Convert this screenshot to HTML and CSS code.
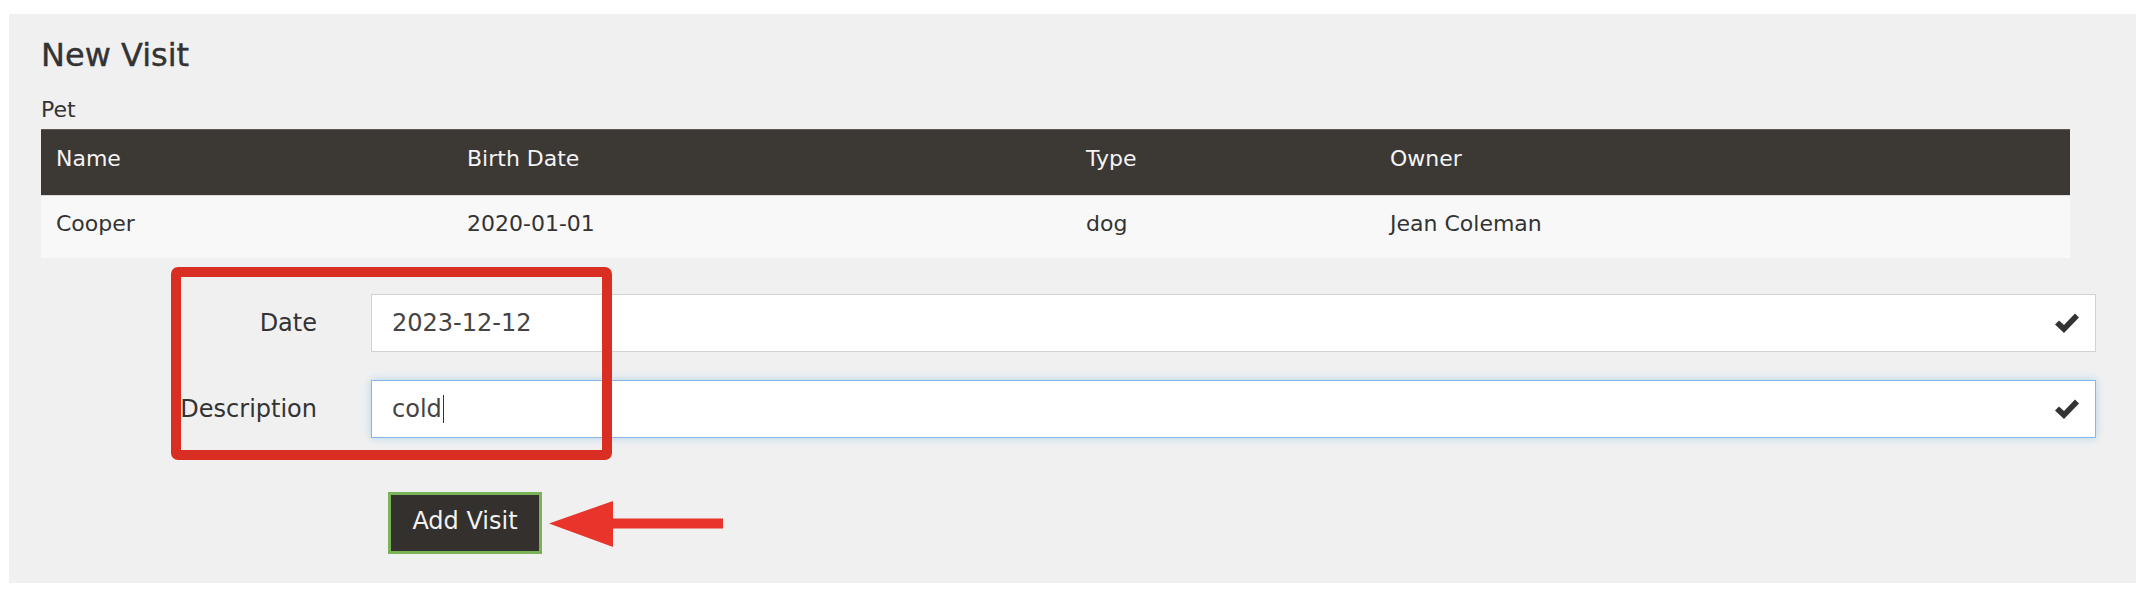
FILE: index.html
```html
<!DOCTYPE html>
<html lang="en">
<head>
<meta charset="utf-8">
<title>New Visit</title>
<link rel="stylesheet" href="styles.css">
</head>
<body>
<div class="page">
  <section class="panel">
    <h2 class="title">New Visit</h2>
    <div class="pet-label">Pet</div>
    <table class="pet-table">
      <colgroup>
        <col class="c-name"><col class="c-birth"><col class="c-type"><col class="c-owner">
      </colgroup>
      <thead>
        <tr><th>Name</th><th>Birth Date</th><th>Type</th><th>Owner</th></tr>
      </thead>
      <tbody>
        <tr><td>Cooper</td><td>2020-01-01</td><td>dog</td><td>Jean Coleman</td></tr>
      </tbody>
    </table>

    <form class="visit-form">
      <div class="form-row">
        <label class="form-label">Date</label>
        <div class="field">
          <span class="field-text">2023-12-12</span>
          <svg class="ok" viewBox="0 0 24 20" width="24" height="20"><path d="M0 11.5 L4 7.5 L9 12 L20 0.5 L24 4.5 L9 20 Z"/></svg>
        </div>
      </div>
      <div class="form-row">
        <label class="form-label">Description</label>
        <div class="field focused">
          <span class="field-text">cold<span class="caret"></span></span>
          <svg class="ok" viewBox="0 0 24 20" width="24" height="20"><path d="M0 11.5 L4 7.5 L9 12 L20 0.5 L24 4.5 L9 20 Z"/></svg>
        </div>
      </div>
      <div class="form-row submit-row">
        <span></span>
        <button type="button" class="btn">Add Visit</button>
      </div>
    </form>

    <div class="annot-box"></div>
    <svg class="annot-arrow" viewBox="0 0 174 46" width="174" height="46"><path d="M0 22.5 L64 0 L64 17.5 L174 17.5 L174 27.5 L64 27.5 L64 46 Z"/></svg>
  </section>
</div>
</body>
</html>
```

FILE: styles.css
```css
html, body {
  margin: 0;
  padding: 0;
  background: #ffffff;
}

body {
  font-family: "DejaVu Sans", "Liberation Sans", sans-serif;
  color: #333333;
}

.page {
  padding: 14px 10px 15px 9px;
}

.panel {
  position: relative;
  background: #f0f0f0;
  padding: 23px 40px 29px 32px;
}

.title {
  margin: 0 0 24px 0;
  font-size: 32px;
  line-height: 36px;
  font-weight: normal;
  color: #333333;
  -webkit-text-stroke: 0.4px #333333;
}

.pet-label {
  font-size: 22px;
  line-height: 26px;
  margin-bottom: 6px;
}

.pet-table {
  width: 2029px;
  border-collapse: collapse;
  table-layout: fixed;
  font-size: 22px;
  line-height: 26px;
}

.c-name { width: 411px; }
.c-birth { width: 619px; }
.c-type { width: 304px; }
.c-owner { width: 695px; }

.pet-table th {
  background: #3c3834;
  color: #f4f4f4;
  font-weight: normal;
  text-align: left;
  padding: 16px 15px 23px;
  border-top: 1px solid #5c5853;
}

.pet-table td {
  background: #f8f8f8;
  padding: 15px 15px 21px;
  border-top: 1px solid #dcdcdc;
  color: #333333;
}

.visit-form {
  margin-top: 36px;
  display: flex;
  flex-direction: column;
  gap: 28px;
}

.form-row {
  display: grid;
  grid-template-columns: 276px 1fr;
  column-gap: 54px;
  align-items: center;
}

.form-label {
  text-align: right;
  font-size: 24px;
  line-height: 28px;
  color: #333333;
}

.field {
  height: 58px;
  box-sizing: border-box;
  background: #ffffff;
  border: 1px solid #d2d2d2;
  display: flex;
  align-items: center;
  justify-content: space-between;
  padding: 0 16px 0 20px;
  font-size: 24px;
  line-height: 28px;
  color: #444444;
}

.field.focused {
  border-color: #86b6ea;
  box-shadow: 0 0 8px rgba(102, 175, 233, 0.45);
}

.field-text {
  display: inline-flex;
  align-items: center;
}

.caret {
  display: inline-block;
  width: 1px;
  height: 28px;
  background: #333333;
  margin-left: 1px;
}

.ok {
  fill: #333333;
  display: block;
}

.submit-row {
  margin-top: 26px;
}

.btn {
  justify-self: start;
  margin-left: 17px;
  width: 154px;
  height: 62px;
  box-sizing: border-box;
  background: #34302d;
  border: 3px solid #79b257;
  color: #f2f2f2;
  font-family: "DejaVu Sans", "Liberation Sans", sans-serif;
  font-size: 24px;
  line-height: 28px;
  padding: 0 0 4px 0;
  cursor: pointer;
}

.annot-box {
  position: absolute;
  left: 162px;
  top: 253px;
  width: 441px;
  height: 193px;
  box-sizing: border-box;
  border: 10px solid #da2e22;
  border-radius: 7px;
  pointer-events: none;
}

.annot-arrow {
  position: absolute;
  left: 540px;
  top: 487px;
  fill: #e8342a;
}
```
